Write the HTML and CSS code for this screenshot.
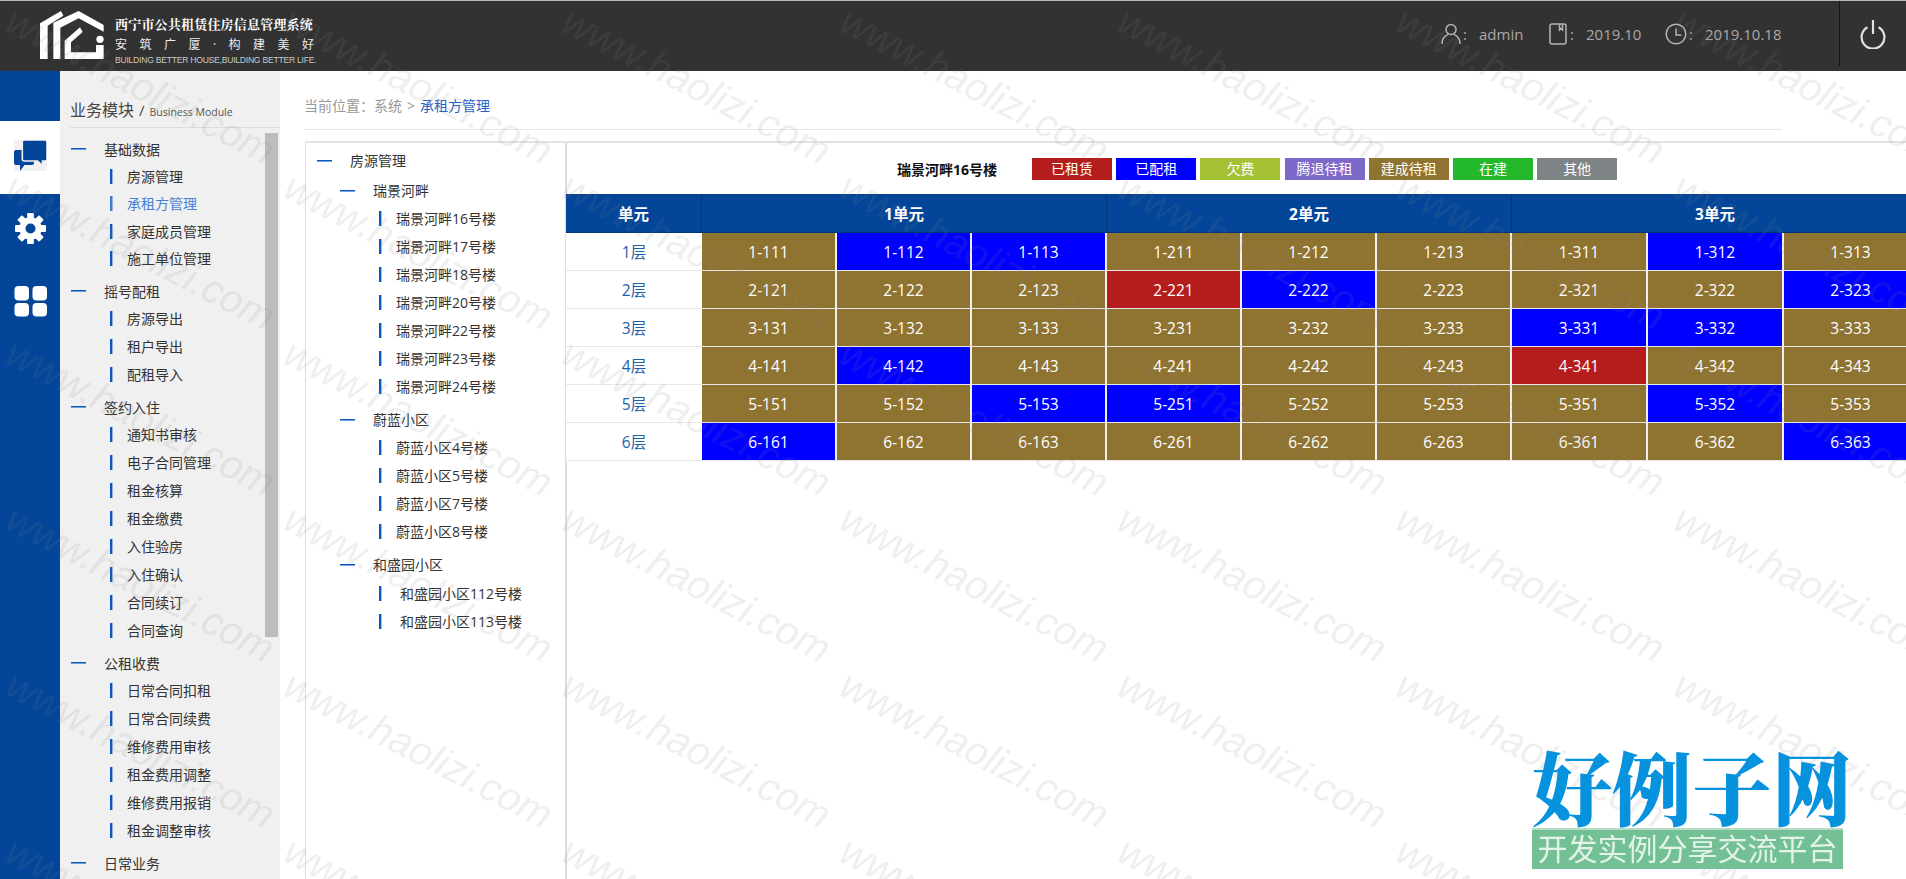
FILE: index.html
```html
<!DOCTYPE html>
<html lang="zh-CN">
<head>
<meta charset="utf-8">
<title>西宁市公共租赁住房信息管理系统</title>
<link rel="stylesheet" href="styles.css">
</head>
<body>
<div class="app">
  <header class="topbar">
    <div class="brand">
      <svg class="brand-mark" viewBox="120 33 192 144" aria-hidden="true">
        <path d="M120 70 L183 33 L190 47 L143 77 V177 H120Z"/>
        <path d="M160 177 V68 L236 33 L311 75 V95 L236 55 L181 83 V177Z"/>
        <path d="M194 177 V122 L240 82 L248 96 L213 127 V157 H288 V135 H311 V177Z"/>
        <circle cx="300" cy="118" r="11"/>
      </svg>
      <div class="brand-text">
        <div class="brand-title">西宁市公共租赁住房信息管理系统</div>
        <div class="brand-slogan"><span>安</span><span>筑</span><span>广</span><span>厦</span><span>·</span><span>构</span><span>建</span><span>美</span><span>好</span></div>
        <div class="brand-en">BUILDING BETTER HOUSE,BUILDING BETTER LIFE.</div>
      </div>
    </div>
    <div class="status">
      <div class="status-item status-user">
        <svg class="status-icon" viewBox="0 0 20 22"><circle cx="10" cy="6.5" r="5"/><path d="M1 21 C1 14 5 12.5 7 11.5 M19 21 C19 14 15 12.5 13 11.5"/></svg>
        <span class="status-colon">:</span><span class="status-val">admin</span>
      </div>
      <div class="status-item status-month">
        <svg class="status-icon" viewBox="0 0 18 22"><rect x="1" y="1" width="16" height="20" rx="2"/><path d="M10.5 1 V7 L12 5.5 L13.5 7 V1"/></svg>
        <span class="status-colon">:</span><span class="status-val">2019.10</span>
      </div>
      <div class="status-item status-date">
        <svg class="status-icon status-clock" viewBox="0 0 22 22"><circle cx="11" cy="11" r="9.8"/><path d="M11 5.5 V12 H16.5"/></svg>
        <span class="status-colon">:</span><span class="status-val">2019.10.18</span>
      </div>
    </div>
    <div class="power">
      <svg class="power-icon" viewBox="0 0 26 30"><path d="M7.5 8.2 A11.4 11.4 0 1 0 18.5 8.2"/><path d="M13 1 V15"/></svg>
    </div>
  </header>

  <div class="workspace">
    <nav class="rail">
      <div class="rail-tile rail-tile--active">
        <svg class="rail-icon" viewBox="0 0 33 31">
          <rect width="33" height="31" fill="#f1f1f1"/>
          <path fill="#034598" d="M2 10 H18 Q20 10 20 12 V23 Q20 25 18 25 H10.5 L6 31 V25 H2 Q0 25 0 23 V12 Q0 10 2 10Z"/>
          <path fill="#034598" stroke="#f1f1f1" stroke-width="1.6" d="M10.5 0 H31 Q33 0 33 2 V19 Q33 21 31 21 H28.5 V25.5 L23.5 21 H10.5 Q8.3 21 8.3 19 V2 Q8.3 0 10.5 0Z"/>
        </svg>
      </div>
      <div class="rail-tile">
        <svg class="rail-icon" viewBox="0 0 32 32" fill="#fff">
          <rect x="12.5" y="0" width="7" height="32" rx="1"/>
          <rect x="12.5" y="0" width="7" height="32" rx="1" transform="rotate(45 16 16)"/>
          <rect x="12.5" y="0" width="7" height="32" rx="1" transform="rotate(90 16 16)"/>
          <rect x="12.5" y="0" width="7" height="32" rx="1" transform="rotate(135 16 16)"/>
          <circle cx="16" cy="16" r="11.5"/>
          <circle cx="16" cy="16" r="5.2" fill="#034598"/>
        </svg>
      </div>
      <div class="rail-tile">
        <svg class="rail-icon" viewBox="0 0 33 31" fill="#fff">
          <rect x="0.5" y="0" width="14.5" height="14.5" rx="4"/>
          <rect x="18.5" y="0" width="14.5" height="14.5" rx="4"/>
          <rect x="0.5" y="17" width="14.5" height="13.5" rx="4"/>
          <rect x="18.5" y="17" width="14.5" height="13.5" rx="4"/>
        </svg>
      </div>
    </nav>

    <aside class="side">
      <div class="side-head"><span class="side-title">业务模块</span><span class="side-slash">/</span><span class="side-sub">Business Module</span></div>
      <div class="side-thumb"></div>
      <div class="menu">
        <section class="menu-sec menu-sec--tight">
          <div class="menu-group">基础数据</div>
          <div class="menu-item">房源管理</div>
          <div class="menu-item menu-item--active">承租方管理</div>
          <div class="menu-item">家庭成员管理</div>
          <div class="menu-item">施工单位管理</div>
        </section>
        <section class="menu-sec">
          <div class="menu-group">摇号配租</div>
          <div class="menu-item">房源导出</div>
          <div class="menu-item">租户导出</div>
          <div class="menu-item">配租导入</div>
        </section>
        <section class="menu-sec">
          <div class="menu-group">签约入住</div>
          <div class="menu-item">通知书审核</div>
          <div class="menu-item">电子合同管理</div>
          <div class="menu-item">租金核算</div>
          <div class="menu-item">租金缴费</div>
          <div class="menu-item">入住验房</div>
          <div class="menu-item">入住确认</div>
          <div class="menu-item">合同续订</div>
          <div class="menu-item">合同查询</div>
        </section>
        <section class="menu-sec">
          <div class="menu-group">公租收费</div>
          <div class="menu-item">日常合同扣租</div>
          <div class="menu-item">日常合同续费</div>
          <div class="menu-item">维修费用审核</div>
          <div class="menu-item">租金费用调整</div>
          <div class="menu-item">维修费用报销</div>
          <div class="menu-item">租金调整审核</div>
        </section>
        <section class="menu-sec">
          <div class="menu-group">日常业务</div>
        </section>
      </div>
    </aside>

    <main class="main">
      <div class="crumb"><span>当前位置：</span><span>系统</span><span class="crumb-sep">&gt;</span><span class="crumb-now">承租方管理</span></div>
      <div class="panels">
        <div class="tree">
          <div class="tree-root">房源管理</div>
          <div class="tree-group">
            <div class="tree-estate">瑞景河畔</div>
            <div class="tree-leaf">瑞景河畔16号楼</div>
            <div class="tree-leaf">瑞景河畔17号楼</div>
            <div class="tree-leaf">瑞景河畔18号楼</div>
            <div class="tree-leaf">瑞景河畔20号楼</div>
            <div class="tree-leaf">瑞景河畔22号楼</div>
            <div class="tree-leaf">瑞景河畔23号楼</div>
            <div class="tree-leaf">瑞景河畔24号楼</div>
          </div>
          <div class="tree-group">
            <div class="tree-estate">蔚蓝小区</div>
            <div class="tree-leaf">蔚蓝小区4号楼</div>
            <div class="tree-leaf">蔚蓝小区5号楼</div>
            <div class="tree-leaf">蔚蓝小区7号楼</div>
            <div class="tree-leaf">蔚蓝小区8号楼</div>
          </div>
          <div class="tree-group">
            <div class="tree-estate">和盛园小区</div>
            <div class="tree-leaf tree-leaf--wide">和盛园小区112号楼</div>
            <div class="tree-leaf tree-leaf--wide">和盛园小区113号楼</div>
          </div>
        </div>
        <div class="board">
          <div class="legend">
            <span class="legend-title">瑞景河畔16号楼</span>
            <span class="chip s-rented">已租赁</span>
            <span class="chip s-alloc">已配租</span>
            <span class="chip s-owe">欠费</span>
            <span class="chip s-vacate">腾退待租</span>
            <span class="chip s-built">建成待租</span>
            <span class="chip s-build">在建</span>
            <span class="chip s-other">其他</span>
          </div>
          <table class="grid">
            <colgroup><col class="col-unit"><col class="col-room"><col class="col-room"><col class="col-room"><col class="col-room"><col class="col-room"><col class="col-room"><col class="col-wide"><col class="col-wide"><col class="col-room"></colgroup>
            <thead><tr><th>单元</th><th colspan="3">1单元</th><th colspan="3">2单元</th><th colspan="3">3单元</th></tr></thead>
            <tbody>
              <tr><td class="floor">1层</td><td class="s-built">1-111</td><td class="s-alloc">1-112</td><td class="s-alloc">1-113</td><td class="s-built">1-211</td><td class="s-built">1-212</td><td class="s-built">1-213</td><td class="s-built">1-311</td><td class="s-alloc">1-312</td><td class="s-built">1-313</td></tr>
              <tr><td class="floor">2层</td><td class="s-built">2-121</td><td class="s-built">2-122</td><td class="s-built">2-123</td><td class="s-rented">2-221</td><td class="s-alloc">2-222</td><td class="s-built">2-223</td><td class="s-built">2-321</td><td class="s-built">2-322</td><td class="s-alloc">2-323</td></tr>
              <tr><td class="floor">3层</td><td class="s-built">3-131</td><td class="s-built">3-132</td><td class="s-built">3-133</td><td class="s-built">3-231</td><td class="s-built">3-232</td><td class="s-built">3-233</td><td class="s-alloc">3-331</td><td class="s-alloc">3-332</td><td class="s-built">3-333</td></tr>
              <tr><td class="floor">4层</td><td class="s-built">4-141</td><td class="s-alloc">4-142</td><td class="s-built">4-143</td><td class="s-built">4-241</td><td class="s-built">4-242</td><td class="s-built">4-243</td><td class="s-rented">4-341</td><td class="s-built">4-342</td><td class="s-built">4-343</td></tr>
              <tr><td class="floor">5层</td><td class="s-built">5-151</td><td class="s-built">5-152</td><td class="s-alloc">5-153</td><td class="s-alloc">5-251</td><td class="s-built">5-252</td><td class="s-built">5-253</td><td class="s-built">5-351</td><td class="s-alloc">5-352</td><td class="s-built">5-353</td></tr>
              <tr><td class="floor">6层</td><td class="s-alloc">6-161</td><td class="s-built">6-162</td><td class="s-built">6-163</td><td class="s-built">6-261</td><td class="s-built">6-262</td><td class="s-built">6-263</td><td class="s-built">6-361</td><td class="s-built">6-362</td><td class="s-alloc">6-363</td></tr>
            </tbody>
          </table>
        </div>
      </div>
    </main>
  </div>
</div>

<svg class="watermark" aria-hidden="true">
  <defs>
    <pattern id="wm" patternUnits="userSpaceOnUse" x="555" y="505" width="278" height="166">
      <text class="watermark-text" x="4" y="23" transform="rotate(27.3 4 23)">www.haolizi.com</text>
    </pattern>
  </defs>
  <rect width="100%" height="100%" fill="url(#wm)"/>
</svg>

<div class="stamp">
  <div class="stamp-name">好例子网</div>
  <div class="stamp-bar">开发实例分享交流平台</div>
</div>
</body>
</html>
```
FILE: styles.css
```css
* { box-sizing: border-box; }
html, body { margin: 0; height: 100%; overflow: hidden; }
body {
  font-family: "Open Sans", "Noto Sans CJK SC", sans-serif;
  font-size: 14px;
  color: #333;
  background: #fff;
}
.app { display: flex; flex-direction: column; height: 100vh; }

/* top bar */
.topbar {
  flex: none;
  height: 71px;
  background: #323232;
  border-top: 1px solid #b5b5b5;
  display: flex;
  align-items: stretch;
}
.brand { display: flex; align-items: flex-start; padding: 10px 0 0 40px; }
.brand-mark { width: 64px; height: 48px; fill: #fff; flex: none; }
.brand-text { margin-left: 11px; width: 199px; color: #fff; }
.brand-title {
  font-family: "Noto Serif CJK SC", "Noto Sans CJK SC", serif;
  font-weight: 700;
  font-size: 13px;
  line-height: 18px;
  letter-spacing: .2px;
  margin-top: 4px;
  white-space: nowrap;
}
.brand-slogan {
  display: flex;
  justify-content: space-between;
  font-size: 12px;
  line-height: 16px;
  margin-top: 4px;
  color: #eee;
}
.brand-en {
  font-family: "Liberation Sans", sans-serif;
  font-size: 8.6px;
  letter-spacing: -.25px;
  line-height: 12px;
  margin-top: 1px;
  color: #c9c9c9;
  white-space: nowrap;
}
.status {
  margin-left: auto;
  display: flex;
  align-items: center;
  color: #a9a9a9;
  font-size: 15px;
  height: 66px;
}
.status-item { display: flex; align-items: center; }
.status-user { width: 107px; }
.status-month { width: 117px; }
.status-date { width: 174px; }
.status-icon { width: 20px; height: 22px; fill: none; stroke: #b4b4b4; stroke-width: 1.5; flex: none; }
.status-clock { width: 22px; }
.status-colon { width: 18px; padding-left: 2px; flex: none; }
.status-val { white-space: nowrap; }
.power {
  width: 67px;
  height: 65px;
  border-left: 1px solid #141414;
  display: flex;
  align-items: center;
  justify-content: center;
}
.power-icon { width: 26px; height: 30px; fill: none; stroke: #e2e2e2; stroke-width: 2.2; margin-top: 1px; }

/* layout */
.workspace { flex: 1; min-height: 0; display: flex; }

/* rail */
.rail { flex: none; width: 60px; background: #034598; padding-top: 50px; }
.rail-tile { height: 73px; padding-bottom: 4px; display: flex; align-items: center; justify-content: center; }
.rail-tile--active { background: #fff; }
.rail-icon { width: 33px; height: 31px; }

/* side menu */
.side { flex: none; width: 220px; background: #f0f0f0; position: relative; overflow: hidden; padding-left: 10px; }
.side-head {
  height: 57px;
  border-bottom: 1px solid #dcdcdc;
  display: flex;
  align-items: baseline;
  padding-top: 27px;
  color: #444;
}
.side-title { font-size: 16px; line-height: 24px; }
.side-slash { font-size: 15px; margin: 0 5px; }
.side-sub { font-size: 10.5px; color: #555; white-space: nowrap; }
.side-thumb { position: absolute; left: 205px; top: 62px; width: 13px; height: 504px; background: #bcbcbc; }
.menu { padding-top: 8px; }
.menu-sec { margin-bottom: 5px; }
.menu-sec--tight { margin-bottom: 6px; }
.menu-group {
  height: 28px;
  line-height: 28px;
  margin-bottom: -1px;
  padding-left: 34px;
  display: flex;
  white-space: nowrap;
  position: relative;
}
.menu-group::before {
  content: "";
  position: absolute;
  left: 1px;
  top: 12px;
  width: 15px;
  height: 1px;
  background: #0a57c0;
  box-shadow: 0 1px 0 rgba(10, 87, 192, .55);
}
.menu-item {
  height: 28px;
  line-height: 28px;
  padding-left: 57px;
  position: relative;
  white-space: nowrap;
}
.menu-sec--tight .menu-item { height: 27.33px; }
.menu-item::before {
  content: "";
  position: absolute;
  left: 40px;
  top: 6px;
  width: 2px;
  height: 15px;
  background: #0a57c0;
  box-shadow: 1px 0 0 rgba(10, 87, 192, .4);
}
.menu-item--active { color: #4a7fd6; }
.menu-item--active::before { background: #3f7ad0; }

/* main */
.main { flex: 1; min-width: 0; overflow: hidden; padding-left: 24px; display: flex; flex-direction: column; }
.crumb {
  flex: none;
  width: 1478px;
  height: 59px;
  border-bottom: 1px solid #e6e6e6;
  padding-top: 25px;
  line-height: 20px;
  color: #999;
  display: flex;
}
.crumb-sep { margin: 0 5px; }
.crumb-now { color: #1f63c8; }
.panels { flex: 1; min-height: 0; display: flex; margin-top: 11px; border-top: 2px solid #e3e3e3; margin-left: 1px; }
.tree { flex: none; width: 261px; border-left: 1px solid #ddd; border-right: 1px solid #ddd; box-shadow: 1px 0 0 #ddd; padding-top: 4px; }
.tree-root, .tree-estate, .tree-leaf { height: 28px; line-height: 28px; position: relative; white-space: nowrap; }
.tree-root { padding-left: 44px; margin-bottom: 2px; }
.tree-estate { padding-left: 67px; }
.tree-leaf { padding-left: 90px; }
.tree-leaf--wide { padding-left: 94px; }
.tree-group { margin-bottom: 5px; }
.tree-group:last-child .tree-estate { margin-bottom: 1px; }
.tree-root::before, .tree-estate::before {
  content: "";
  position: absolute;
  top: 13px;
  width: 15px;
  height: 1px;
  background: #0a57c0;
  box-shadow: 0 1px 0 rgba(10, 87, 192, .55);
}
.tree-root::before { left: 11px; }
.tree-estate::before { left: 34px; }
.tree-leaf::before {
  content: "";
  position: absolute;
  left: 73px;
  top: 6px;
  width: 2px;
  height: 15px;
  background: #0a57c0;
  box-shadow: 1px 0 0 rgba(10, 87, 192, .4);
}

/* board */
.board { flex: 1; min-width: 0; overflow: hidden; }
.legend { height: 51px; display: flex; align-items: center; padding-left: 331px; }
.legend-title { font-weight: 700; color: #111; width: 135px; white-space: nowrap; }
.chip { width: 80px; height: 22px; line-height: 22px; text-align: center; color: #fff; margin-right: 4.2px; flex: none; }
.s-rented { background: #b51c1c; }
.s-alloc { background: #0000ff; }
.s-owe { background: #a5c235; }
.s-vacate { background: #7b68c8; }
.s-built { background: #8f7331; }
.s-build { background: #24b92b; }
.s-other { background: #7e8486; }

.grid { table-layout: fixed; width: 1353px; border-collapse: separate; border-spacing: 0; font-size: 15.5px; }
.col-unit { width: 136px; }
.col-room { width: 135px; }
.col-wide { width: 136px; }
.grid th {
  height: 39px;
  padding: 0;
  background: #034598;
  color: #fff;
  font-weight: 700;
  border-top: 1px solid #0b3f85;
  border-right: 1px solid #02367c;
  border-bottom: 1px solid #02367c;
}
.grid td {
  height: 38px;
  padding: 0;
  text-align: center;
  color: #fff;
  border-right: 2px solid #f0f0f0;
  border-bottom: 1px solid #e8e8e8;
}
.grid .floor { color: #1f5fa8; background: #fff; border-right: 0; }

/* overlays */
.watermark { position: fixed; left: 0; top: 0; width: 100%; height: 100%; pointer-events: none; }
.watermark-text {
  font-family: "Liberation Sans", sans-serif;
  font-style: italic;
  font-size: 40px;
  fill: rgba(128, 128, 128, .13);
}
.stamp { position: fixed; left: 1532px; top: 742px; width: 311px; pointer-events: none; }
.stamp-name {
  font-family: "Noto Serif CJK SC", "Noto Sans CJK SC", serif;
  font-weight: 900;
  font-size: 80px;
  line-height: 86px;
  color: #0792de;
  white-space: nowrap;
  text-align: center;
}
.stamp-bar {
  height: 41px;
  background: #74c095;
  border-top: 2px solid #b6dcc6;
  color: #e4f3ea;
  font-size: 30px;
  line-height: 38px;
  text-align: center;
  white-space: nowrap;
}
```
